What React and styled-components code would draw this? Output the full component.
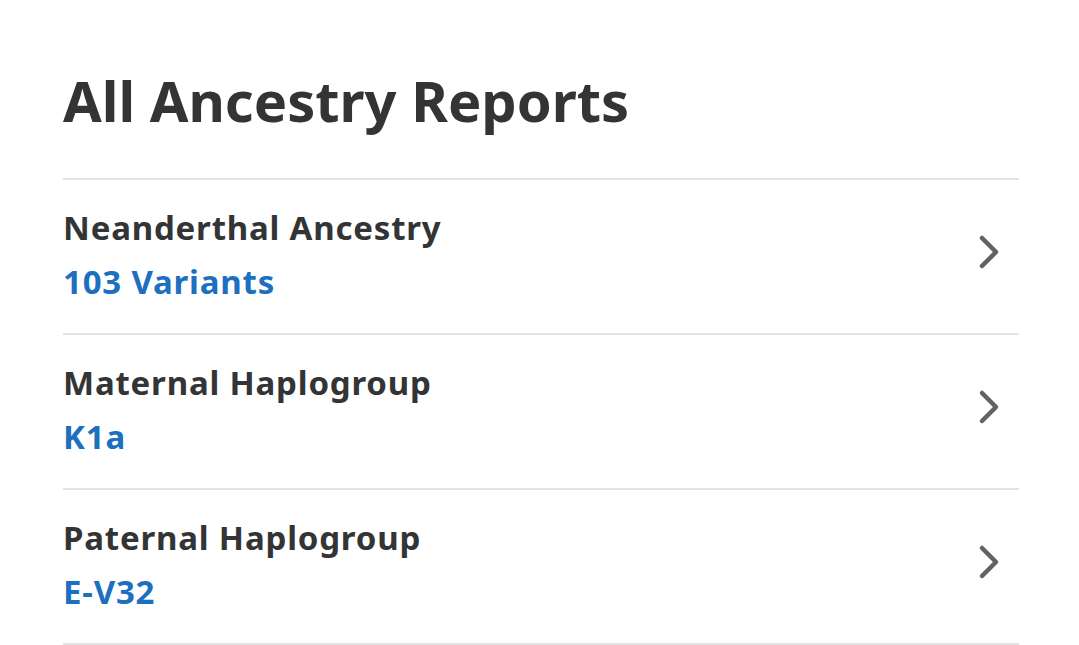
import styled, { createGlobalStyle } from 'styled-components';

const GlobalStyle = createGlobalStyle`
    body {
        margin: 0;
        background: #ffffff;
        font-family: "Noto Sans", "Open Sans", sans-serif;
    }
`;

const Page = styled.div`
    padding: 62px 60px 0 63px;
`;

const Title = styled.h1`
    margin: 0;
    font-size: 56px;
    font-weight: 700;
    line-height: 76px;
    color: #333436;
    padding-bottom: 40px;
    border-bottom: 2px solid #e3e3e3;
`;

const List = styled.ul`
    list-style: none;
    margin: 0;
    padding: 0;
`;

const Row = styled.li`
    display: flex;
    align-items: center;
    justify-content: space-between;
    height: 153px;
    border-bottom: 2px solid #e3e3e3;
    cursor: pointer;
`;

const Text = styled.div`
    display: flex;
    flex-direction: column;
    gap: 14px;
    margin-bottom: 4px;
`;

const Name = styled.span`
    font-size: 33px;
    font-weight: 700;
    line-height: 40px;
    letter-spacing: 0.8px;
    color: #333436;
`;

const Value = styled(Name)`
    color: #1d6fc0;
`;

const Chevron = styled.svg`
    width: 24px;
    height: 36px;
    margin-right: 18px;
    margin-bottom: 10px;
    flex-shrink: 0;
`;

const reports = [
    { name: 'Neanderthal Ancestry', value: '103 Variants' },
    { name: 'Maternal Haplogroup', value: 'K1a' },
    { name: 'Paternal Haplogroup', value: 'E-V32' },
];

const App = () => {
    return (
        <Page>
            <GlobalStyle />
            <Title>All Ancestry Reports</Title>
            <List>
                {reports.map((r) => (
                    <Row key={r.name}>
                        <Text>
                            <Name>{r.name}</Name>
                            <Value>{r.value}</Value>
                        </Text>
                        <Chevron viewBox="0 0 24 36">
                            <path
                                d="M5 4 L19 18 L5 32"
                                fill="none"
                                stroke="#626262"
                                strokeWidth="4.5"
                                strokeLinecap="round"
                                strokeLinejoin="round"
                            />
                        </Chevron>
                    </Row>
                ))}
            </List>
        </Page>
    );
};

export default App;
